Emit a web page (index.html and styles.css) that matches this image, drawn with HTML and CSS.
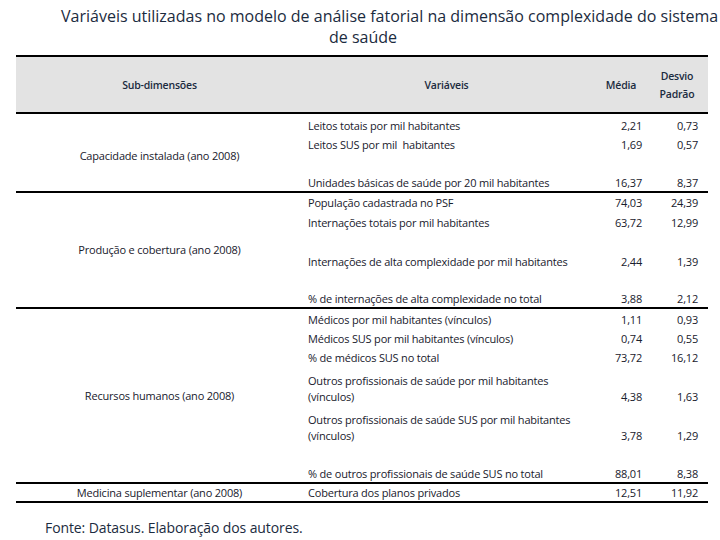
FILE: index.html
```html
<!DOCTYPE html>
<html lang="pt">
<head>
<meta charset="utf-8">
<title>Variáveis utilizadas</title>
<link rel="stylesheet" href="styles.css">
</head>
<body>
<div class="page">
  <h1 class="title">
    <span class="title-l1">Variáveis utilizadas no modelo de análise fatorial na dimensão complexidade do sistema</span>
    <span class="title-l2">de saúde</span>
  </h1>

  <div class="table">
    <div class="thead">
      <div class="th th-sub">Sub-dimensões</div>
      <div class="th th-var">Variáveis</div>
      <div class="th th-med">Média</div>
      <div class="th th-dp">Desvio<br>Padrão</div>
    </div>

    <div class="group">
      <div class="sub sub-g1">Capacidade instalada (ano 2008)</div>
      <div class="rows">
        <div class="row h20"><span class="var">Leitos totais por mil habitantes</span><span class="num">2,21</span><span class="num dp">0,73</span></div>
        <div class="row h19"><span class="var">Leitos SUS por mil&nbsp; habitantes</span><span class="num">1,69</span><span class="num dp">0,57</span></div>
        <div class="row h38"><span class="var">Unidades básicas de saúde por 20 mil habitantes</span><span class="num">16,37</span><span class="num dp">8,37</span></div>
      </div>
    </div>

    <div class="group">
      <div class="sub">Produção e cobertura (ano 2008)</div>
      <div class="rows">
        <div class="row h18"><span class="var">População cadastrada no PSF</span><span class="num">74,03</span><span class="num dp">24,39</span></div>
        <div class="row h20"><span class="var">Internações totais por mil habitantes</span><span class="num">63,72</span><span class="num dp">12,99</span></div>
        <div class="row h39"><span class="var">Internações de alta complexidade por mil habitantes</span><span class="num">2,44</span><span class="num dp">1,39</span></div>
        <div class="row h37"><span class="var">% de internações de alta complexidade no total</span><span class="num">3,88</span><span class="num dp">2,12</span></div>
      </div>
    </div>

    <div class="group">
      <div class="sub">Recursos humanos (ano 2008)</div>
      <div class="rows">
        <div class="row h19"><span class="var">Médicos por mil habitantes (vínculos)</span><span class="num">1,11</span><span class="num dp">0,93</span></div>
        <div class="row h19"><span class="var">Médicos SUS por mil habitantes (vínculos)</span><span class="num">0,74</span><span class="num dp">0,55</span></div>
        <div class="row h19"><span class="var">% de médicos SUS no total</span><span class="num">73,72</span><span class="num dp">16,12</span></div>
        <div class="row h39"><span class="var">Outros profissionais de saúde por mil habitantes<br>(vínculos)</span><span class="num">4,38</span><span class="num dp">1,63</span></div>
        <div class="row h39"><span class="var">Outros profissionais de saúde SUS por mil habitantes<br>(vínculos)</span><span class="num">3,78</span><span class="num dp">1,29</span></div>
        <div class="row h38"><span class="var">% de outros profissionais de saúde SUS no total</span><span class="num">88,01</span><span class="num dp">8,38</span></div>
      </div>
    </div>

    <div class="group">
      <div class="sub">Medicina suplementar (ano 2008)</div>
      <div class="rows">
        <div class="row h17"><span class="var">Cobertura dos planos privados</span><span class="num">12,51</span><span class="num dp">11,92</span></div>
      </div>
    </div>
  </div>

  <p class="source">Fonte: Datasus. Elaboração dos autores.</p>
</div>
</body>
</html>
```

FILE: styles.css
```css
html, body {
  margin: 0;
  padding: 0;
  background: #ffffff;
}

body {
  font-family: "Open Sans", "Noto Sans", sans-serif;
  color: #18202c;
}

.page {
  width: 720px;
  height: 540px;
  overflow: hidden;
}

.title {
  margin: 0;
  padding-top: 6px;
  width: 710px;
  margin-left: 8px;
  font-size: 16px;
  font-weight: 400;
  line-height: 21px;
  letter-spacing: 0;
  color: #1b2b40;
}

.title-l1 {
  display: block;
  white-space: nowrap;
  padding-left: 53px;
}

.title-l2 {
  display: block;
  text-align: center;
}

.table {
  margin-top: 7px;
  margin-left: 16px;
  width: 692px;
  border-top: 2px solid #000;
  font-size: 11px;
  letter-spacing: -0.2px;
}

.thead {
  display: grid;
  grid-template-columns: 287px 287px 58px 60px;
  height: 55px;
  background: #e3e3e3;
  border-bottom: 2px solid #000;
  align-items: center;
  font-size: 10.5px;
  font-weight: 600;
  color: #1b2b40;
  line-height: 18px;
}

.th {
  text-align: center;
}

.th-med {
  padding-left: 4px;
}

.th-dp {
  padding-right: 2px;
}

.group {
  display: flex;
  border-bottom: 2px solid #000;
}

.sub {
  width: 287px;
  flex: none;
  display: flex;
  align-items: center;
  justify-content: center;
  line-height: 16px;
}

.sub-g1 {
  padding-top: 6px;
  box-sizing: border-box;
}

.rows {
  flex: 1;
  display: flex;
  flex-direction: column;
}

.row {
  display: grid;
  grid-template-columns: 287px 58px 60px;
  align-items: end;
  line-height: 16px;
  box-sizing: border-box;
}

.var {
  padding-left: 5px;
  white-space: nowrap;
}

.num {
  text-align: right;
  padding-right: 6px;
}

.num.dp {
  padding-right: 10px;
}

.h17 { height: 17px; }
.h18 { height: 18px; }
.h19 { height: 19px; }
.h20 { height: 20px; }
.h37 { height: 37px; }
.h38 { height: 38px; }
.h39 { height: 39px; }

.source {
  margin: 15px 0 0 45px;
  font-size: 14px;
  letter-spacing: -0.1px;
  color: #1b2b40;
}
```
